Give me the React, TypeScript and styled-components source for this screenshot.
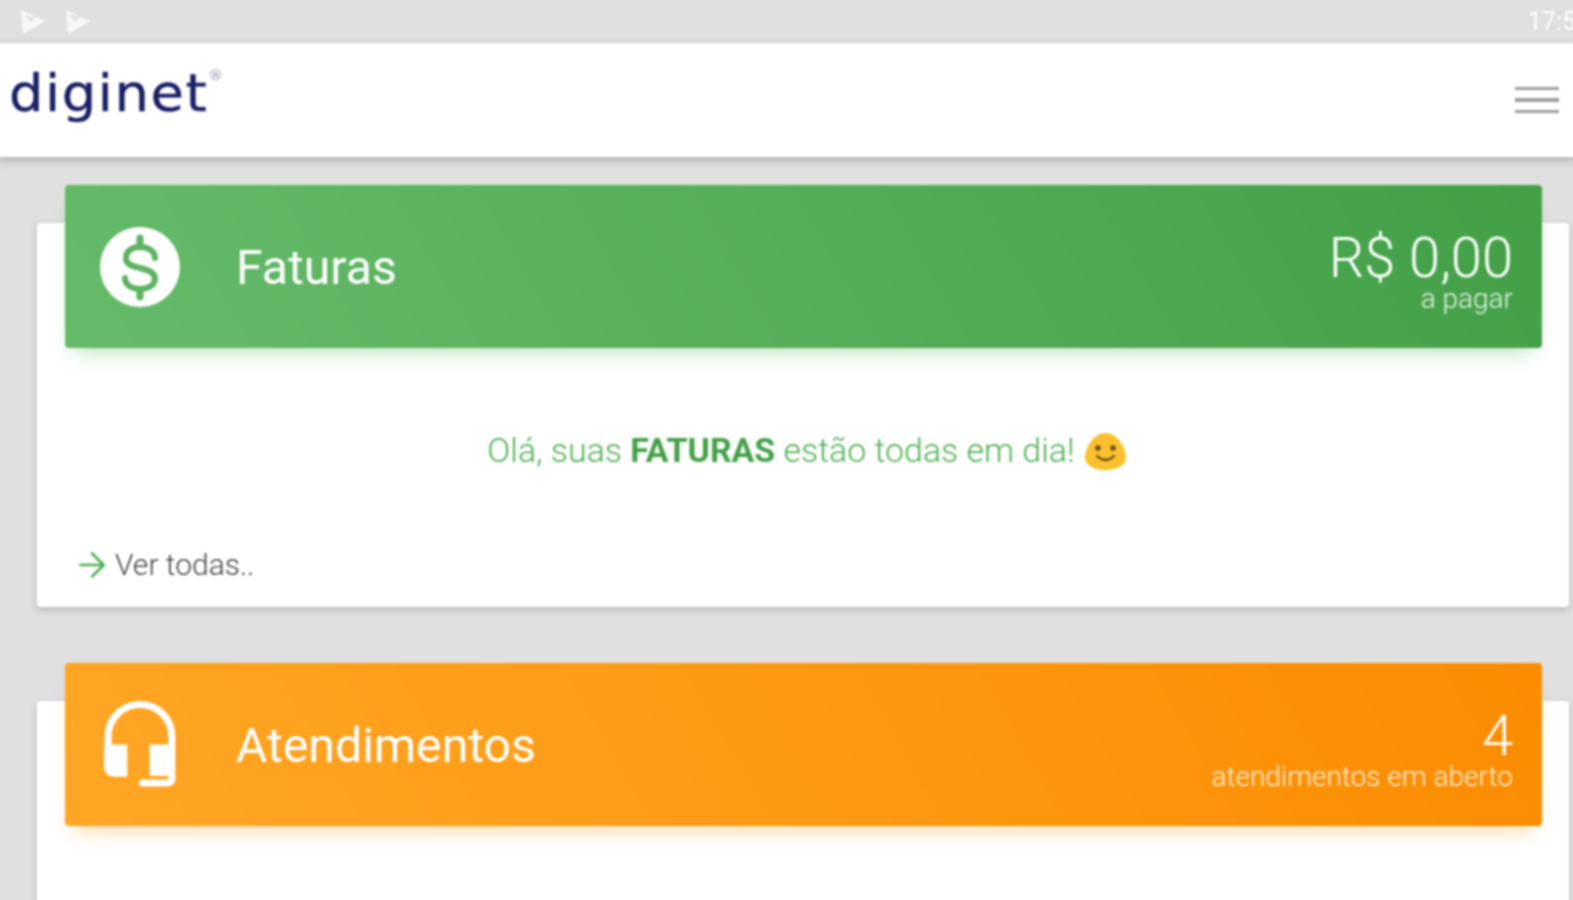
import styled, { createGlobalStyle } from "styled-components";
import { ArrowRight } from "lucide-react";

const GlobalStyle = createGlobalStyle`
  html, body {
    margin: 0;
    padding: 0;
    height: 100%;
    background: #e0e0e0;
    overflow: hidden;
  }
  * {
    box-sizing: border-box;
  }
`;

const Screen = styled.div`
  width: 1573px;
  height: 900px;
  overflow: hidden;
  background: #e0e0e0;
`;

// a bit bigger than the screen so the blur doesn't fade at the edges
const Canvas = styled.div`
  width: 1581px;
  height: 908px;
  margin: -4px;
  overflow: hidden;
  padding-top: 4px;
  font-family: Roboto, "Liberation Sans", sans-serif;
  filter: blur(0.8px);
`;

const StatusBar = styled.div`
  height: 43px;
  display: flex;
  align-items: center;
  padding: 0 4px 0 25px;
  gap: 21px;
`;

const StatusTime = styled.span`
  margin-left: auto;
  margin-right: -3px;
  font-size: 25px;
  color: #fff;
  white-space: nowrap;
`;

const TopBar = styled.header`
  height: 114px;
  background: #fff;
  display: flex;
  align-items: center;
  justify-content: space-between;
  padding: 0 18px 0 13px;
  box-shadow: 0 3px 9px rgba(0, 0, 0, 0.24);
  position: relative;
`;

const Logo = styled.div`
  display: flex;
  align-items: flex-start;
  color: #1a1f66;
  font-family: "DejaVu Sans", sans-serif;
  font-size: 52px;
  line-height: 60px;
  letter-spacing: 1.5px;
  margin-top: -14px;
  transform: scaleX(1.045);
  transform-origin: left center;
  -webkit-text-stroke: 0.4px #1a1f66;

  sup {
    font-size: 14px;
    line-height: 14px;
    color: #8a8fa8;
    letter-spacing: 0;
    margin-top: 5px;
    -webkit-text-stroke: 0;
  }
`;

const MenuButton = styled.div`
  width: 44px;
  display: flex;
  flex-direction: column;
  gap: 8px;
`;

const MenuLine = styled.span`
  height: 3.5px;
  background: #9e9e9e;
`;

const Main = styled.main`
  padding: 66px 8px 0 41px;
`;

const Card = styled.section`
  background: #fff;
  border-radius: 4px;
  box-shadow: 0 3px 9px rgba(0, 0, 0, 0.18);
  min-height: 384px;
  padding: 0 27px 0 28px;
  display: flex;
  flex-direction: column;

  & + & {
    margin-top: 94px;
  }
`;

const CardHeader = styled.div<{ $from: string; $to: string; $glow: string }>`
  height: 163px;
  margin-top: -38px;
  padding: 0 29px 0 35px;
  border-radius: 4px;
  display: flex;
  align-items: center;
  color: #fff;
  background: linear-gradient(60deg, ${(p) => p.$from}, ${(p) => p.$to});
  box-shadow: 0 12px 20px -10px ${(p) => p.$glow};
`;

const IconSlot = styled.div`
  width: 80px;
  display: flex;
  justify-content: center;
`;

const CardTitle = styled.h2`
  margin: 0 0 0 56px;
  padding-top: 3px;
  font-size: 48.2px;
  font-weight: 400;
  line-height: 1;
`;

const Stats = styled.div`
  margin-left: auto;
  padding-top: 12px;
  text-align: right;
  font-weight: 300;
`;

const StatValue = styled.div`
  font-size: 56px;
  line-height: 53px;
`;

const StatLabel = styled.div`
  font-size: 28px;
  line-height: 28px;
  opacity: 0.85;
`;

const Message = styled.p`
  margin: 81px 0 0;
  padding-left: 6px;
  display: flex;
  justify-content: center;
  align-items: center;
  gap: 10px;
  font-size: 33.9px;
  line-height: 44px;
  font-weight: 300;
  color: #4caf50;

  strong {
    font-weight: 700;
    color: #43a047;
  }
`;

const CardFooter = styled.div`
  margin-top: auto;
  padding: 0 0 22px 7px;
  display: flex;
  align-items: center;
  gap: 3px;
  font-size: 30px;
  line-height: 36px;
  font-weight: 300;
  color: #444;

  svg {
    color: #4caf50;
  }
`;

const PlayNotice = () => (
  <svg width="24" height="24" viewBox="0 0 24 24">
    <path d="M0 0 L24 11 L2 24 Z" fill="#f7f7f7" />
    <path d="M5 5 L10 10 L16 2" fill="none" stroke="#e0e0e0" strokeWidth="2.5" />
  </svg>
);

const DollarIcon = () => (
  <svg width="80" height="80" viewBox="0 0 80 80">
    <circle cx="40" cy="40" r="40" fill="#fff" />
    <g fill="none" stroke="#5cb360" strokeWidth="6" strokeLinecap="round">
      <path d="M55 31 C55 24 48 20 40 20 C32 20 26 24 26 31 C26 38 33 39 40 41 C48 43 55 45 55 52 C55 58 48 62 40 62 C32 62 25 58 25 51" />
      <path d="M40 11 V19 M40 63 V70" strokeWidth="7" />
    </g>
  </svg>
);

const HeadsetIcon = () => (
  <svg width="72" height="87" viewBox="0 0 71 86">
    <path d="M4 46 V35 A31.5 31.5 0 0 1 67 35 V76" fill="none" stroke="#fff" strokeWidth="7" />
    <path d="M0 43 H23 V75 H10 A10 10 0 0 1 0 65 Z" fill="#fff" />
    <path d="M45 43 H70 V74 H45 Z" fill="#fff" />
    <path d="M38 81 H62 Q67 81 67 76" fill="none" stroke="#fff" strokeWidth="7" strokeLinecap="round" />
  </svg>
);

const SmileEmoji = () => (
  <svg width="41" height="37" viewBox="0 0 41 37">
    <path d="M20.5 0 C31 0 39 11 41 23 C42 32 32 37 20.5 37 C9 37 -1 32 0 23 C2 11 10 0 20.5 0 Z" fill="#fbc02d" />
    <circle cx="13" cy="15" r="2.8" fill="#6b4e16" />
    <circle cx="28" cy="15" r="2.8" fill="#6b4e16" />
    <path d="M12 23 Q20.5 31 29 23" fill="none" stroke="#6b4e16" strokeWidth="2.2" strokeLinecap="round" />
  </svg>
);

export default function App() {
  return (
    <Screen>
      <GlobalStyle />
      <Canvas>
        <StatusBar>
          <PlayNotice />
          <PlayNotice />
          <StatusTime>17:5</StatusTime>
        </StatusBar>
        <TopBar>
          <Logo>
            diginet<sup>®</sup>
          </Logo>
          <MenuButton>
            <MenuLine />
            <MenuLine />
            <MenuLine />
          </MenuButton>
        </TopBar>
        <Main>
          <Card>
            <CardHeader $from="#66bb6a" $to="#43a047" $glow="rgba(76, 175, 80, 0.45)">
              <IconSlot>
                <DollarIcon />
              </IconSlot>
              <CardTitle>Faturas</CardTitle>
              <Stats>
                <StatValue>R$ 0,00</StatValue>
                <StatLabel>a pagar</StatLabel>
              </Stats>
            </CardHeader>
            <Message>
              <span>
                Olá, suas <strong>FATURAS</strong> estão todas em dia!
              </span>
              <SmileEmoji />
            </Message>
            <CardFooter>
              <ArrowRight size={40} strokeWidth={1.6} />
              Ver todas..
            </CardFooter>
          </Card>
          <Card>
            <CardHeader $from="#ffa726" $to="#fb8c00" $glow="rgba(255, 152, 0, 0.45)">
              <IconSlot>
                <HeadsetIcon />
              </IconSlot>
              <CardTitle>Atendimentos</CardTitle>
              <Stats>
                <StatValue>4</StatValue>
                <StatLabel>atendimentos em aberto</StatLabel>
              </Stats>
            </CardHeader>
          </Card>
        </Main>
      </Canvas>
    </Screen>
  );
}
